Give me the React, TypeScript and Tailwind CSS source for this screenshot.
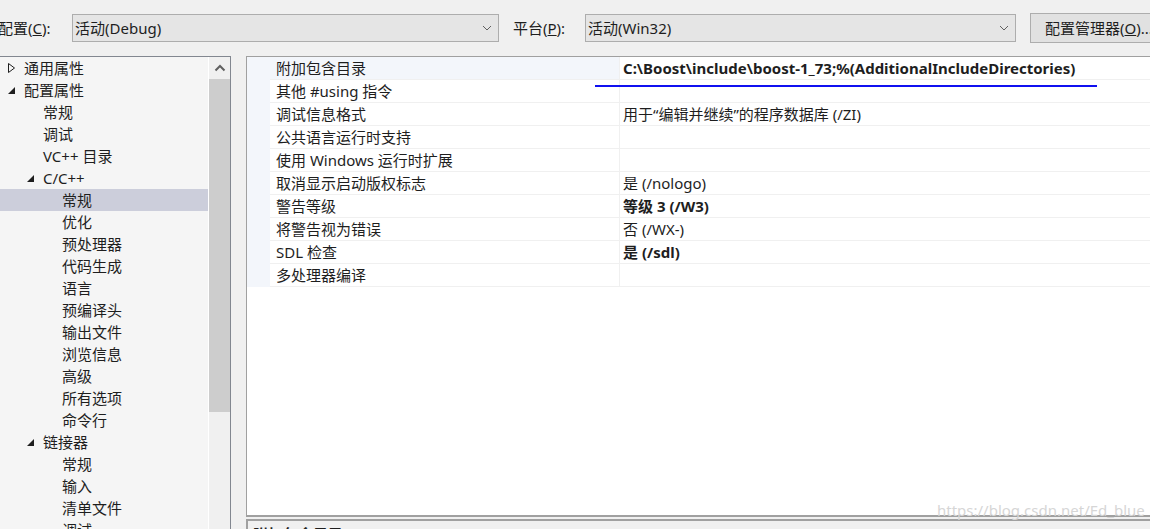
import React from 'react';

const font = { fontFamily: '"Noto Sans", "Noto Sans CJK SC", sans-serif' };

type TreeItem = { label: string; level: number; arrow?: 'open' | 'closed'; selected?: boolean };

const treeItems: TreeItem[] = [
  { label: '通用属性', level: 0, arrow: 'closed' },
  { label: '配置属性', level: 0, arrow: 'open' },
  { label: '常规', level: 1 },
  { label: '调试', level: 1 },
  { label: 'VC++ 目录', level: 1 },
  { label: 'C/C++', level: 1, arrow: 'open' },
  { label: '常规', level: 2, selected: true },
  { label: '优化', level: 2 },
  { label: '预处理器', level: 2 },
  { label: '代码生成', level: 2 },
  { label: '语言', level: 2 },
  { label: '预编译头', level: 2 },
  { label: '输出文件', level: 2 },
  { label: '浏览信息', level: 2 },
  { label: '高级', level: 2 },
  { label: '所有选项', level: 2 },
  { label: '命令行', level: 2 },
  { label: '链接器', level: 1, arrow: 'open' },
  { label: '常规', level: 2 },
  { label: '输入', level: 2 },
  { label: '清单文件', level: 2 },
  { label: '调试', level: 2 },
];

const props: { name: string; value: string; bold?: boolean }[] = [
  { name: '附加包含目录', value: 'C:\\Boost\\include\\boost-1_73;%(AdditionalIncludeDirectories)', bold: true },
  { name: '其他 #using 指令', value: '' },
  { name: '调试信息格式', value: '用于“编辑并继续”的程序数据库 (/ZI)' },
  { name: '公共语言运行时支持', value: '' },
  { name: '使用 Windows 运行时扩展', value: '' },
  { name: '取消显示启动版权标志', value: '是 (/nologo)' },
  { name: '警告等级', value: '等级 3 (/W3)', bold: true },
  { name: '将警告视为错误', value: '否 (/WX-)' },
  { name: 'SDL 检查', value: '是 (/sdl)', bold: true },
  { name: '多处理器编译', value: '' },
];

function Chevron() {
  return (
    <svg width="10" height="6" viewBox="0 0 10 6" className="shrink-0">
      <polyline points="1,1 5,5 9,1" fill="none" stroke="#606060" strokeWidth="1" />
    </svg>
  );
}

function Arrow({ kind }: { kind: 'open' | 'closed' }) {
  if (kind === 'closed') {
    return (
      <svg width="10" height="12" viewBox="0 0 10 12">
        <polygon points="1.5,1.5 7.5,6 1.5,10.5" fill="none" stroke="#1e1e1e" strokeWidth="1" />
      </svg>
    );
  }
  return (
    <svg width="10" height="12" viewBox="0 0 10 12">
      <polygon points="8,3 8,10 1,10" fill="#1e1e1e" />
    </svg>
  );
}

function Dropdown({ text, width }: { text: string; width: string }) {
  return (
    <div className={`${width} shrink-0 h-[28px] bg-[#e5e5e5] border border-[#adadad] flex items-center justify-between pl-[2px] pr-[6px]`}>
      <span className="text-[15px] text-[#1e1e1e]">{text}</span>
      <Chevron />
    </div>
  );
}

export default function App() {
  return (
    <div className="relative w-[1150px] h-[529px] overflow-hidden bg-[#f0f0f0] text-[#1e1e1e]" style={font}>
      {/* top configuration bar */}
      <div className="h-[56px] flex items-center">
        <span className="text-[15px] -ml-[2px] w-[74px] shrink-0 whitespace-nowrap">
          配置(<span className="underline">C</span>):
        </span>
        <Dropdown text="活动(Debug)" width="w-[427px]" />
        <span className="text-[15px] ml-[14px] w-[72px] shrink-0 whitespace-nowrap">
          平台(<span className="underline">P</span>):
        </span>
        <Dropdown text="活动(Win32)" width="w-[431px]" />
        <div className="ml-[14px] w-[140px] shrink-0 h-[30px] bg-[#e1e1e1] border border-[#adadad] flex items-center pl-[14px] text-[15px] whitespace-nowrap">
          配置管理器(<span className="underline">O</span>)...
        </div>
      </div>

      <div className="flex h-[473px]">
        {/* tree */}
        <div className="w-[231px] shrink-0 border-t border-r border-[#828790] flex">
          <div className="w-[209px] bg-[#f5f5f5] border-r border-white">
            {treeItems.map((t, i) => (
              <div
                key={i}
                className={`h-[22px] flex items-center text-[15px] ${t.selected ? 'bg-[#cccedb]' : ''} ${
                  t.level === 0 ? 'pl-[7px]' : t.level === 1 ? 'pl-[26px]' : 'pl-[62px]'
                }`}
              >
                {t.level < 2 && (
                  <span className="w-[17px] flex items-center">{t.arrow && <Arrow kind={t.arrow} />}</span>
                )}
                <span className="whitespace-nowrap">{t.label}</span>
              </div>
            ))}
          </div>
          <div className="flex-1 bg-[#f0f0f0] flex flex-col">
            <div className="h-[22px] flex items-center justify-center">
              <svg width="12" height="8" viewBox="0 0 12 8">
                <polyline points="1.5,6.5 6,2 10.5,6.5" fill="none" stroke="#606060" strokeWidth="2" />
              </svg>
            </div>
            <div className="h-[333px] bg-[#cdcdcd]" />
          </div>
        </div>

        <div className="w-[15px] shrink-0" />

        {/* property grid + description */}
        <div className="flex-1 flex flex-col min-w-0">
          <div className="h-[461px] shrink-0 bg-white border-t border-l border-b-2 border-[#a0a0a0]">
            {props.map((p, i) => (
              <div key={i} className="h-[23px] flex">
                <div className="w-[23px] shrink-0 bg-[#f3f6fb]" />
                <div className={`flex-1 flex border-b border-[#f0f0f0] ${i === 0 ? 'bg-[#f3f6fb]' : ''}`}>
                  <div className="w-[350px] shrink-0 border-r border-[#f0f0f0] pl-[6px] flex items-center text-[15px] whitespace-nowrap">
                    {p.name}
                  </div>
                  <div
                    className={`flex-1 pl-[3px] flex items-center text-[15px] whitespace-nowrap ${
                      p.bold ? 'font-bold' : ''
                    } ${i === 0 ? 'bg-white' : ''}`}
                  >
                    {p.value}
                  </div>
                </div>
              </div>
            ))}
          </div>
          <div className="h-[2px] shrink-0" />
          <div className="flex-1 min-h-0 overflow-hidden border-t-2 border-l-2 border-[#a0a0a0] pl-[5px] pt-[1px]">
            <span className="text-[15px] font-bold whitespace-nowrap">附加包含目录</span>
          </div>
        </div>
      </div>

      {/* annotation underline */}
      <div className="absolute left-[595px] top-[85px] w-[502px] h-[2px] bg-[#1010f0]" />

      {/* watermark */}
      <div className="absolute left-[937px] top-[499px] text-[15px] text-[#d6d6d6] whitespace-nowrap pointer-events-none">
        https://blog.csdn.net/Ed_blue
      </div>
    </div>
  );
}
